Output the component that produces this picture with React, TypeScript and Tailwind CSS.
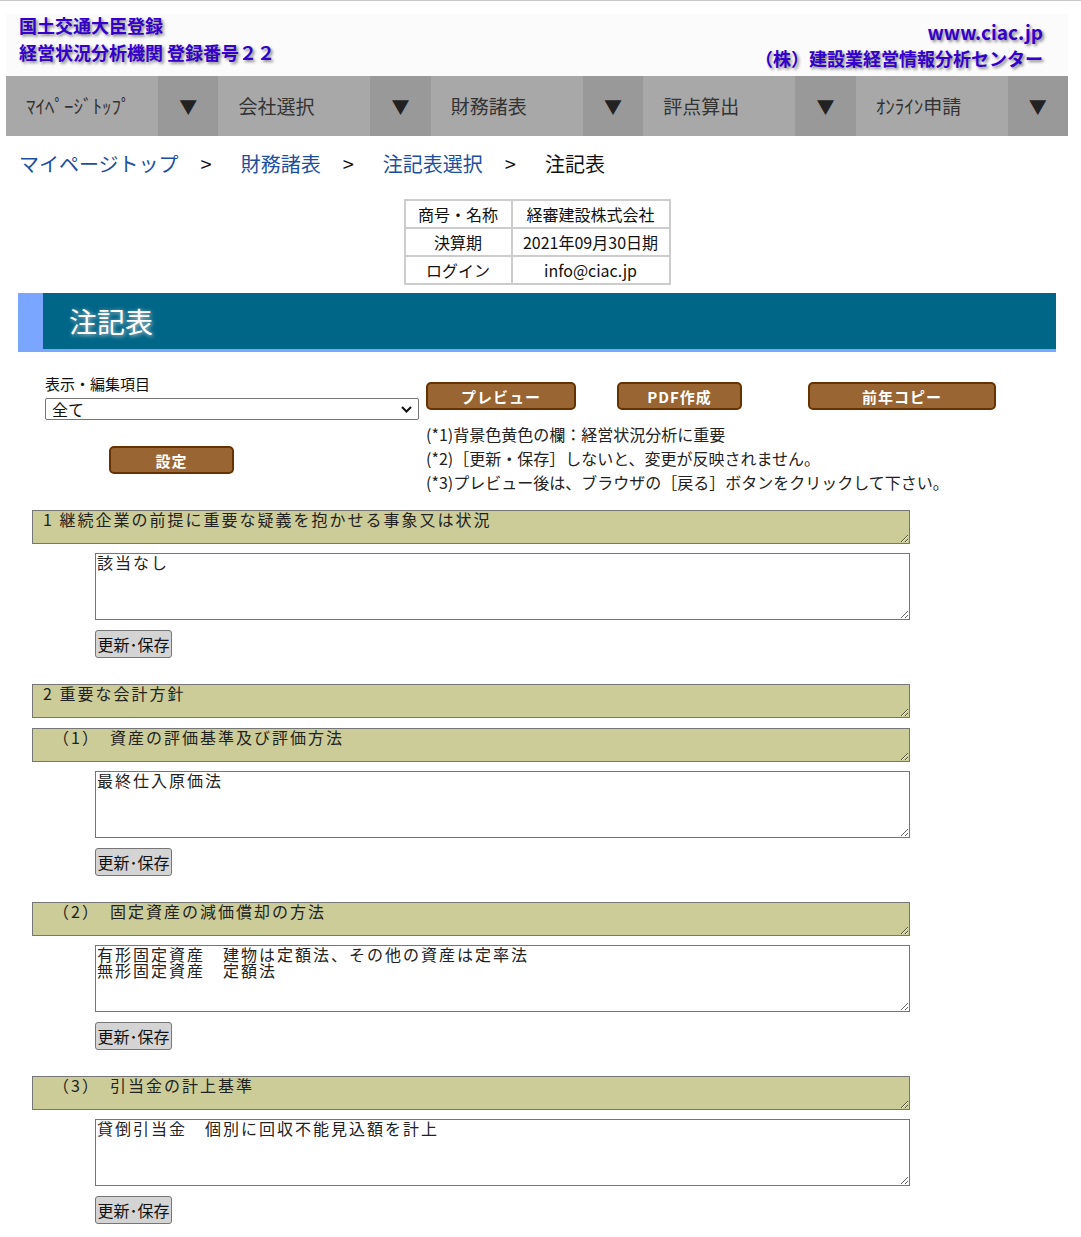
import React from "react";

const JP = "font-['Meiryo','Noto_Sans_CJK_JP','Noto_Sans',sans-serif]";

const NAV = ["ﾏｲﾍﾟｰｼﾞﾄｯﾌﾟ", "会社選択", "財務諸表", "評点算出", "ｵﾝﾗｲﾝ申請"];

const NOTES = [
  "(*1)背景色黄色の欄：経営状況分析に重要",
  "(*2)［更新・保存］しないと、変更が反映されません。",
  "(*3)プレビュー後は、ブラウザの［戻る］ボタンをクリックして下さい。",
];

function HeadBox({ text }: { text: string }) {
  return (
    <textarea
      readOnly
      defaultValue={text}
      className="block w-[878px] h-[34px] ml-[32px] bg-[#cccc99] border border-[#767676] pl-[10px] pt-0 text-[16px] leading-[16px] text-[#222] whitespace-pre font-['Noto_Sans_CJK_JP',monospace] tracking-[2px] outline-none resize-y"
    />
  );
}

function Entry({ value }: { value: string }) {
  return (
    <div className="ml-[95px] flex flex-col">
      <textarea
        readOnly
        defaultValue={value}
        className="block w-[815px] h-[67px] mt-[9px] bg-white border border-[#767676] px-[1px] pt-0 text-[16px] leading-[16px] text-[#222] whitespace-pre font-['Noto_Sans_CJK_JP',monospace] tracking-[2px] outline-none resize-y"
      />
      <button className="mt-[10px] w-[77px] h-[28px] bg-[#d4d4d4] border border-[#767676] rounded-[3px] text-[16px] leading-none text-[#111] font-['Noto_Sans_CJK_JP',sans-serif]">
        更新･保存
      </button>
    </div>
  );
}

function BrownBtn({ label, w }: { label: string; w: string }) {
  return (
    <button
      className={`${w} h-[28px] bg-[#996633] border-2 border-[#663300] rounded-[5px] text-white font-bold text-[15px] leading-none tracking-[1px] ${JP}`}
    >
      {label}
    </button>
  );
}

export default function App() {
  return (
    <div className={`w-[1081px] min-h-[1237px] bg-white border-t border-[#c8c8c8] ${JP}`}>
      {/* header */}
      <div className="ml-[6px] w-[1062px] mt-[13px] h-[62px] bg-[#fbfbfb] flex justify-between pl-[13px] pr-[25px]">
        <div className="text-[#3300cc] font-bold text-[18px] leading-[27px] [text-shadow:2px_2px_3px_#888] mt-[-2px]">
          <div>国土交通大臣登録</div>
          <div>経営状況分析機関 登録番号２２</div>
        </div>
        <div className="text-[#3300cc] font-bold text-[18px] leading-[27px] text-right pt-[4px] [text-shadow:2px_2px_3px_#888]">
          <div className="text-[19px] leading-[27px]">www.ciac.jp</div>
          <div>（株）建設業経営情報分析センター</div>
        </div>
      </div>

      {/* nav */}
      <div className="ml-[6px] w-[1062px] h-[60px] flex">
        {NAV.map((n) => (
          <div key={n} className="flex flex-1">
            <div className="w-[152px] bg-[#a8a8a8] flex items-center pl-[20px] text-[19px] text-[#333]">{n}</div>
            <div className="flex-1 bg-[#999999] flex items-center justify-center text-[18px] text-[#222]">▼</div>
          </div>
        ))}
      </div>

      {/* breadcrumb */}
      <div className="flex items-center h-[56px] pl-[19px] text-[20px]">
        <span className="text-[#1d4fa0]">マイページトップ</span>
        <span className="ml-[22px] mr-[29px] text-[#111]">&gt;</span>
        <span className="text-[#1d4fa0]">財務諸表</span>
        <span className="ml-[22px] mr-[29px] text-[#111]">&gt;</span>
        <span className="text-[#1d4fa0]">注記表選択</span>
        <span className="ml-[22px] mr-[29px] text-[#111]">&gt;</span>
        <span className="text-[#111]">注記表</span>
      </div>

      {/* info table */}
      <div className="flex justify-center mt-[7px]">
        <table className="border-collapse border-2 border-[#cccccc] text-[16px] text-[#111] ml-[-7px]">
          <tbody>
            {[
              ["商号・名称", "経審建設株式会社"],
              ["決算期", "2021年09月30日期"],
              ["ログイン", "info@ciac.jp"],
            ].map(([k, v]) => (
              <tr key={k} className="h-[28px]">
                <td className="border-2 border-[#cccccc] w-[107px] text-center leading-none">{k}</td>
                <td className="border-2 border-[#cccccc] w-[158px] text-center leading-none">{v}</td>
              </tr>
            ))}
          </tbody>
        </table>
      </div>

      {/* title bar */}
      <div className="ml-[18px] w-[1038px] mt-[8px] h-[59px] flex border-b-[3px] border-[#7aa6ff]">
        <div className="w-[25px] bg-[#7aa6ff]" />
        <div className="flex-1 bg-[#006688] flex items-center pl-[26px] text-white text-[28px] [text-shadow:1px_1px_4px_#ccc]">
          注記表
        </div>
      </div>

      {/* controls */}
      <div className="flex mt-[30px]">
        <div className="ml-[45px] w-[374px] flex flex-col">
          <div className="text-[15px] leading-[22px] text-[#111] mt-[-9px]">表示・編集項目</div>
          <div className="mt-[3px] h-[22px] border border-[#767676] rounded-[2px] bg-white flex items-center justify-between pl-[6px] pr-[6px] text-[16px] leading-none text-[#111]">
            <span>全て</span>
            <svg width="11" height="7" viewBox="0 0 11 7">
              <path d="M1 1l4.5 4.5L10 1" fill="none" stroke="#111" strokeWidth="2" />
            </svg>
          </div>
          <div className="ml-[64px] mt-[26px]">
            <BrownBtn label="設定" w="w-[125px]" />
          </div>
        </div>
        <div className="ml-[7px] flex flex-col">
          <div className="flex">
            <BrownBtn label="プレビュー" w="w-[150px]" />
            <div className="ml-[41px]">
              <BrownBtn label="PDF作成" w="w-[125px]" />
            </div>
            <div className="ml-[66px]">
              <BrownBtn label="前年コピー" w="w-[188px]" />
            </div>
          </div>
          <div className="mt-[12px] text-[16px] leading-[24px] text-[#222]">
            {NOTES.map((n) => (
              <div key={n}>{n}</div>
            ))}
          </div>
        </div>
      </div>

      {/* sections */}
      <div className="mt-[16px] flex flex-col">
        <HeadBox text="1 継続企業の前提に重要な疑義を抱かせる事象又は状況" />
        <Entry value="該当なし" />
        <div className="mt-[26px]">
          <HeadBox text="2 重要な会計方針" />
        </div>
        <div className="mt-[10px]">
          <HeadBox text={"　（1）\u2002資産の評価基準及び評価方法"} />
        </div>
        <Entry value="最終仕入原価法" />
        <div className="mt-[26px]">
          <HeadBox text={"　（2）\u2002固定資産の減価償却の方法"} />
        </div>
        <Entry value={"有形固定資産　建物は定額法、その他の資産は定率法\n無形固定資産　定額法"} />
        <div className="mt-[26px]">
          <HeadBox text={"　（3）\u2002引当金の計上基準"} />
        </div>
        <Entry value="貸倒引当金　個別に回収不能見込額を計上" />
      </div>
    </div>
  );
}
